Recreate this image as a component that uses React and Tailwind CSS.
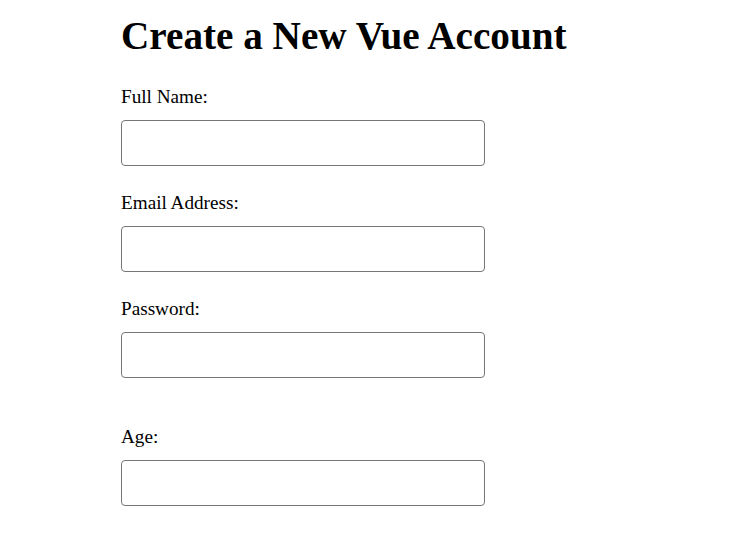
export default function App() {
  const fields = [
    { label: "Full Name:", gap: "" },
    { label: "Email Address:", gap: "mt-[26px]" },
    { label: "Password:", gap: "mt-[26px]" },
    { label: "Age:", gap: "mt-[48px]" },
  ];
  return (
    <div
      className="min-h-[542px] w-full bg-white pl-[121px] pt-[15px] text-black"
      style={{ fontFamily: '"Liberation Serif", "Times New Roman", serif' }}
    >
      <h1 className="m-0 text-[39.2px] font-bold leading-[42.5px]">
        Create a New Vue Account
      </h1>
      <form className="mt-[28.5px] flex flex-col">
        {fields.map((f, i) => (
          <div key={i} className={`flex flex-col ${f.gap}`}>
            <label className="text-[19.2px] leading-[21.25px]">{f.label}</label>
            <input
              type="text"
              className="mt-[12.75px] h-[46px] w-[364px] rounded-[4px] border border-[#767676] bg-white"
            />
          </div>
        ))}
      </form>
    </div>
  );
}
